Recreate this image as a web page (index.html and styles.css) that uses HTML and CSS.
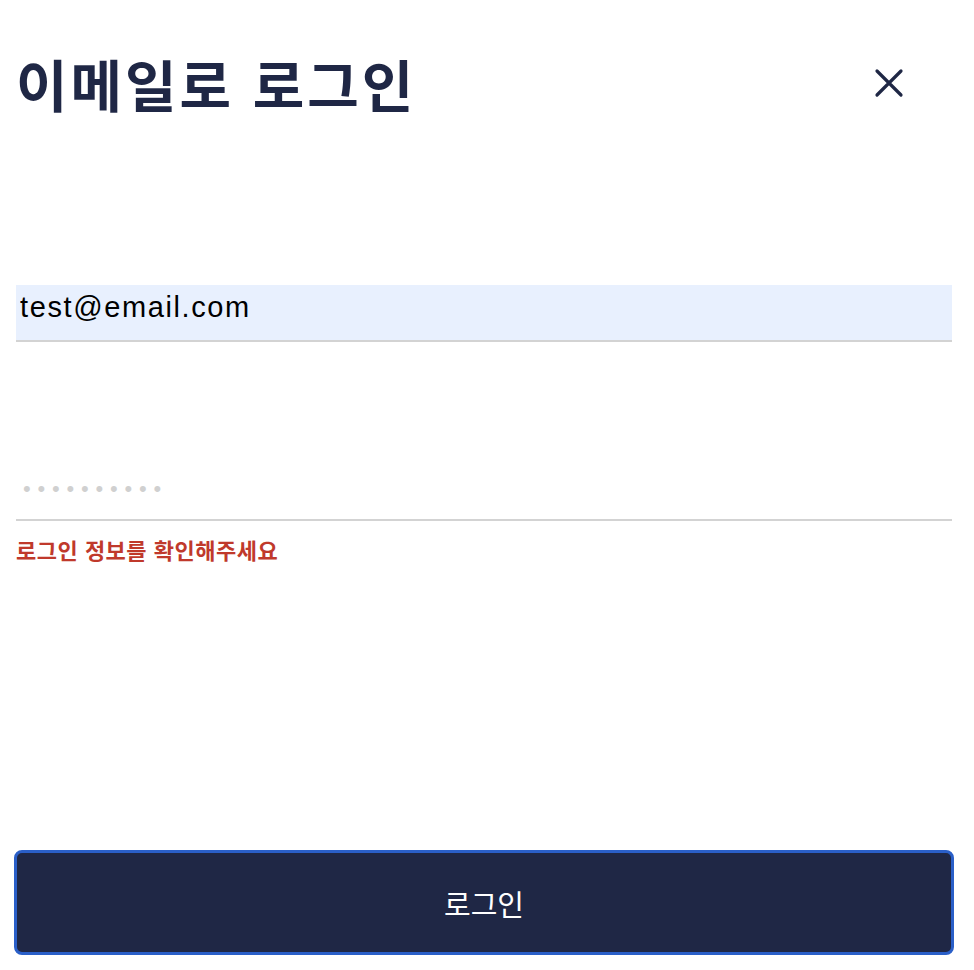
FILE: index.html
```html
<!DOCTYPE html>
<html lang="ko">
<head>
<meta charset="utf-8">
<link rel="stylesheet" href="styles.css">
</head>
<body>
<div class="page">
  <header class="header">
    <h1 class="title">이메일로 로그인</h1>
    <button class="close" aria-label="닫기">
      <svg width="30" height="30" viewBox="0 0 30 30"><path d="M3 3 L27 27 M27 3 L3 27" stroke="#1f2745" stroke-width="3.2" stroke-linecap="round"/></svg>
    </button>
  </header>
  <form class="form">
    <input class="field email" type="text" value="test@email.com">
    <input class="field password" type="password" placeholder="••••••••••">
    <p class="error">로그인 정보를 확인해주세요</p>
    <button type="button" class="submit">로그인</button>
  </form>
</div>
</body>
</html>
```
FILE: styles.css
```css
html, body { margin: 0; padding: 0; background: #fff; }
body { font-family: "Noto Sans CJK KR", "Noto Sans", sans-serif; }
.page { padding: 0 22px 0 16px; display: flex; flex-direction: column; }
.header { display: flex; justify-content: space-between; align-items: center; height: 166px; }
.title { margin: 0; font-size: 56px; font-weight: 700; color: #1f2745; letter-spacing: 3px; line-height: 1; }
.close { background: none; border: 0; padding: 0; margin-right: 48px; width: 30px; height: 30px; display: flex; }
.form { display: flex; flex-direction: column; padding-top: 119px; }
.field { display: block; width: 100%; box-sizing: border-box; height: 57px; border: 0; border-bottom: 2px solid #d3d3d3; outline: none; font-size: 29px; padding: 0 4px 10px; margin: 0; font-family: "Liberation Sans", Arial, sans-serif; letter-spacing: 1.6px; color: #000; }
.email { background: #e8f0fe; }
.password { margin-top: 122px; background: #fff; padding-left: 7px; }
.password::placeholder { color: #d0d0d0; font-size: 22px; letter-spacing: 6.8px; }
.error { margin: 15px 0 0; font-size: 22px; font-weight: 700; color: #c0392b; line-height: 1.2; letter-spacing: 0.5px; }
.submit { margin-top: 288px; width: 940px; margin-left: -2px; height: 105px; box-sizing: border-box; border: 3px solid #2a5fc8; border-radius: 8px; background: #1f2745; color: #fff; font-size: 29px; font-family: "Noto Sans CJK KR", sans-serif; font-weight: 400; }
```
